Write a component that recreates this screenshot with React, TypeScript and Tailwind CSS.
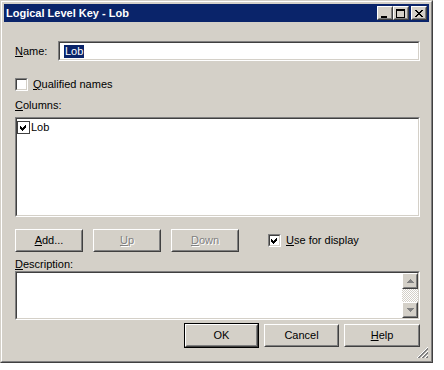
import React from "react";

const Sunken = ({ className = "", children }: { className?: string; children?: React.ReactNode }) => (
  <div className={`border border-t-[#808080] border-l-[#808080] border-r-white border-b-white ${className}`}>
    <div className="h-full w-full border border-t-[#404040] border-l-[#404040] border-r-[#d4d0c8] border-b-[#d4d0c8] bg-white">
      {children}
    </div>
  </div>
);

const Raised = ({ className = "", innerClass = "", children }: { className?: string; innerClass?: string; children?: React.ReactNode }) => (
  <div className={`border border-t-white border-l-white border-r-[#404040] border-b-[#404040] bg-[#d4d0c8] ${className}`}>
    <div className={`h-full w-full border border-t-[#d4d0c8] border-l-[#d4d0c8] border-r-[#808080] border-b-[#808080] flex items-center justify-center ${innerClass}`}>
      {children}
    </div>
  </div>
);

const Check = () => (
  <svg width="7" height="7" viewBox="0 0 7 7" shapeRendering="crispEdges">
    <polygon points="0,2 2,4 6,0 6,3 2,7 0,5" fill="#000" />
  </svg>
);

const CheckBox = ({ checked }: { checked?: boolean }) => (
  <Sunken className="w-[13px] h-[13px] shrink-0">
    <div className="w-full h-full flex items-center justify-center">{checked ? <Check /> : null}</div>
  </Sunken>
);

const U = ({ children }: { children: React.ReactNode }) => (
  <span className="underline decoration-1 underline-offset-[1px]">{children}</span>
);

const Btn = ({ w, children, disabled }: { w: string; children: React.ReactNode; disabled?: boolean }) => (
  <Raised className={`${w} h-[23px]`}>
    <span className={disabled ? "text-[#808080] [text-shadow:1px_1px_0_#fff]" : ""}>{children}</span>
  </Raised>
);

export default function App() {
  return (
    <div className="bg-white min-h-[370px] font-['Liberation_Sans',Arial,sans-serif] text-[11px] leading-[13px] text-black">
      <div className="w-[433px] h-[363px] bg-[#d4d0c8] border border-t-[#d4d0c8] border-l-[#d4d0c8] border-r-[#404040] border-b-[#404040]">
        <div className="h-full border border-t-white border-l-white border-r-[#808080] border-b-[#808080] p-[2px] flex flex-col">
          {/* Title bar */}
          <div className="h-[18px] bg-[#0a246a] flex items-center pl-[2px] pr-[2px] shrink-0">
            <span className="text-white font-bold text-[11px] leading-[13px]">Logical Level Key - Lob</span>
            <div className="ml-auto flex items-center">
              <Raised className="w-[16px] h-[14px]">
                <svg width="8" height="7" viewBox="0 0 8 7" shapeRendering="crispEdges" className="mt-[2px] mr-[1px]">
                  <rect x="0" y="5" width="6" height="2" fill="#000" />
                </svg>
              </Raised>
              <Raised className="w-[16px] h-[14px]">
                <svg width="9" height="9" viewBox="0 0 9 9" shapeRendering="crispEdges" className="mr-[1px]">
                  <rect x="0" y="0" width="9" height="2" fill="#000" />
                  <rect x="0" y="0" width="1" height="9" fill="#000" />
                  <rect x="8" y="0" width="1" height="9" fill="#000" />
                  <rect x="0" y="8" width="9" height="1" fill="#000" />
                </svg>
              </Raised>
              <Raised className="w-[16px] h-[14px] ml-[2px]">
                <svg width="8" height="7" viewBox="0 0 8 7" shapeRendering="crispEdges" className="mr-[1px]">
                  <path d="M0 0h2v1h-2z M6 0h2v1h-2z M1 1h2v1h-2z M5 1h2v1h-2z M2 2h4v1h-4z M3 3h2v1h-2z M2 4h4v1h-4z M1 5h2v1h-2z M5 5h2v1h-2z M0 6h2v1h-2z M6 6h2v1h-2z" fill="#000" />
                </svg>
              </Raised>
            </div>
          </div>

          {/* Content */}
          <div className="flex-1 flex flex-col pl-[11px] relative">
            {/* Name row */}
            <div className="flex items-center mt-[19px]">
              <span className="w-[43px]"><U>N</U>ame:</span>
              <Sunken className="w-[362px] h-[20px]">
                <div className="h-full flex items-center pl-[4px]">
                  <span className="bg-[#0a246a] text-white px-[1px]">Lob</span>
                </div>
              </Sunken>
            </div>

            {/* Qualified names */}
            <div className="flex items-center mt-[17px] h-[13px]">
              <CheckBox />
              <span className="ml-[5px]"><U>Q</U>ualified names</span>
            </div>

            {/* Columns */}
            <div className="mt-[8px] h-[13px]"><U>C</U>olumns:</div>
            <Sunken className="w-[405px] h-[100px] mt-[5px]">
              <div className="flex items-center pl-[0px] pt-[2px]">
                <div className="w-[13px] h-[13px] border border-[#404040] bg-white flex items-center justify-center">
                  <Check />
                </div>
                <span className="ml-[1px]">Lob</span>
              </div>
            </Sunken>

            {/* Buttons row */}
            <div className="flex items-center mt-[12px]">
              <Btn w="w-[68px]"><U>A</U>dd...</Btn>
              <div className="ml-[10px]"><Btn w="w-[68px]" disabled><U>U</U>p</Btn></div>
              <div className="ml-[10px]"><Btn w="w-[68px]" disabled><U>D</U>own</Btn></div>
              <div className="ml-[29px] flex items-center">
                <CheckBox checked />
                <span className="ml-[5px]"><U>U</U>se for display</span>
              </div>
            </div>

            {/* Description */}
            <div className="mt-[6px] h-[13px]"><U>D</U>escription:</div>
            <Sunken className="w-[405px] h-[49px]">
              <div className="h-full flex justify-end">
                <div className="w-[16px] h-full flex flex-col">
                  <Raised className="w-[16px] h-[16px] shrink-0">
                    <svg width="7" height="4" viewBox="0 0 7 4" shapeRendering="crispEdges" className="overflow-visible">
                      <polygon points="3.5,0 7,4 0,4" fill="#808080" />
                    </svg>
                  </Raised>
                  <div className="flex-1 bg-[repeating-conic-gradient(#d4d0c8_0_25%,#ffffff_0_50%)] bg-[length:2px_2px]" />
                  <Raised className="w-[16px] h-[16px] shrink-0">
                    <svg width="7" height="4" viewBox="0 0 7 4" shapeRendering="crispEdges">
                      <polygon points="0,0 7,0 3.5,4" fill="#808080" />
                    </svg>
                  </Raised>
                </div>
              </div>
            </Sunken>

            {/* OK Cancel Help */}
            <div className="flex items-center justify-end w-[405px] mt-[3px] gap-[5px]">
              <div className="border border-black">
                <Btn w="w-[73px]">OK</Btn>
              </div>
              <Btn w="w-[75px]">Cancel</Btn>
              <Btn w="w-[76px]"><U>H</U>elp</Btn>
            </div>

            {/* size grip */}
            <svg width="12" height="12" viewBox="0 0 12 12" shapeRendering="crispEdges" className="absolute right-0 bottom-0">
              <path d="M11 0 L0 11" stroke="#ffffff" />
              <path d="M11 1 L1 11 M11 2 L2 11" stroke="#808080" />
              <path d="M11 4 L4 11" stroke="#ffffff" />
              <path d="M11 5 L5 11 M11 6 L6 11" stroke="#808080" />
              <path d="M11 8 L8 11" stroke="#ffffff" />
              <path d="M11 9 L9 11 M11 10 L10 11" stroke="#808080" />
            </svg>
          </div>
        </div>
      </div>
    </div>
  );
}
